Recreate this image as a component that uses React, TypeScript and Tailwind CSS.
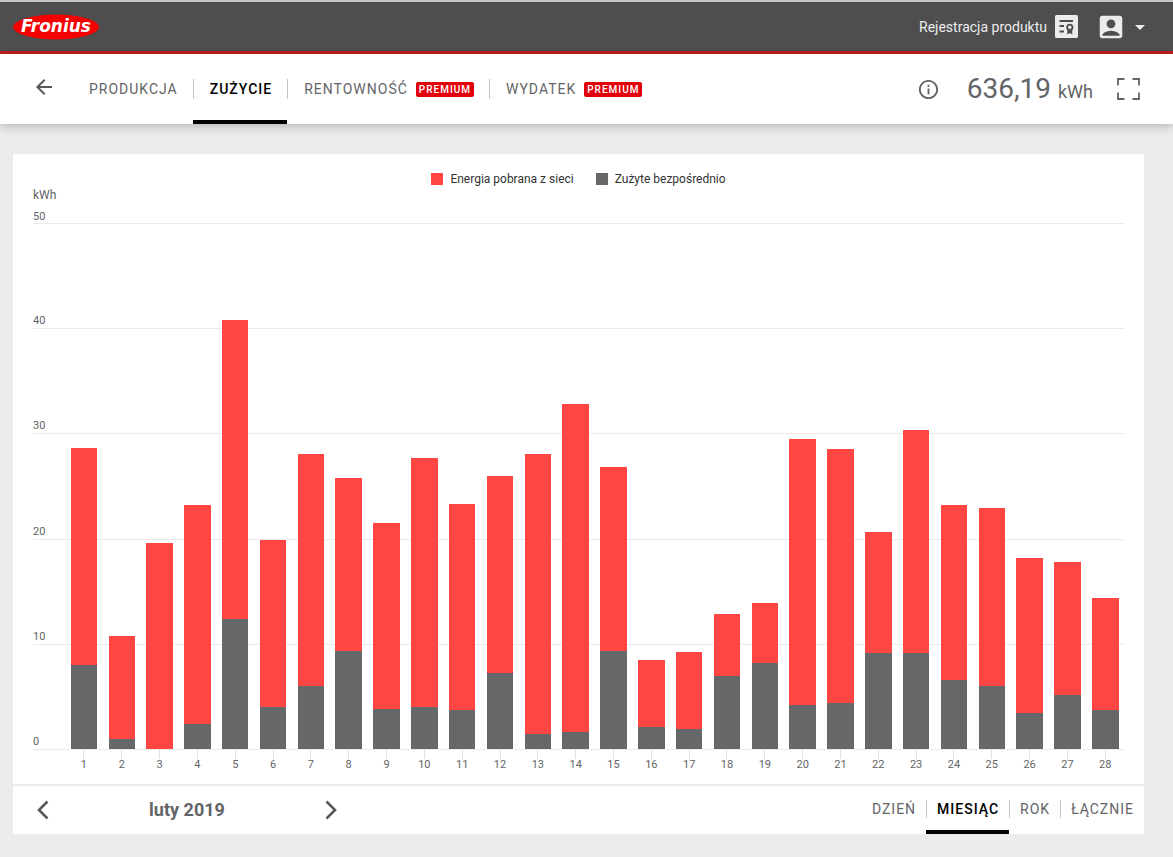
import clsx from "clsx";
import { MdAccountBox, MdArrowBack, MdArrowDropDown, MdInfoOutline } from "react-icons/md";

const MAX_KWH = 50;

const tabs = [
  { label: "PRODUKCJA" },
  { label: "ZUŻYCIE", active: true },
  { label: "RENTOWNOŚĆ", premium: true },
  { label: "WYDATEK", premium: true },
];

const ranges = [
  { label: "DZIEŃ" },
  { label: "MIESIĄC", active: true },
  { label: "ROK" },
  { label: "ŁĄCZNIE" },
];

// kWh per day: total consumption and the part consumed directly
const days = [
  { total: 28.7, direct: 8.0 },
  { total: 10.8, direct: 1.0 },
  { total: 19.6, direct: 0 },
  { total: 23.2, direct: 2.4 },
  { total: 40.9, direct: 12.4 },
  { total: 19.9, direct: 4.0 },
  { total: 28.1, direct: 6.0 },
  { total: 25.8, direct: 9.3 },
  { total: 21.5, direct: 3.8 },
  { total: 27.7, direct: 4.0 },
  { total: 23.3, direct: 3.7 },
  { total: 26.0, direct: 7.2 },
  { total: 28.1, direct: 1.4 },
  { total: 32.9, direct: 1.6 },
  { total: 26.9, direct: 9.3 },
  { total: 8.5, direct: 2.1 },
  { total: 9.2, direct: 1.9 },
  { total: 12.9, direct: 7.0 },
  { total: 13.9, direct: 8.2 },
  { total: 29.5, direct: 4.2 },
  { total: 28.6, direct: 4.4 },
  { total: 20.7, direct: 9.1 },
  { total: 30.4, direct: 9.1 },
  { total: 23.2, direct: 6.6 },
  { total: 23.0, direct: 6.0 },
  { total: 18.2, direct: 3.4 },
  { total: 17.8, direct: 5.1 },
  { total: 14.4, direct: 3.7 },
];

function Logo() {
  return (
    <svg width="86" height="26" viewBox="0 0 86 26" role="img" aria-label="Fronius">
      <ellipse cx="43" cy="13" rx="43" ry="12.5" fill="#f50000" />
      <text
        x="43"
        y="18"
        textAnchor="middle"
        fontFamily="DejaVu Sans"
        fontSize="17"
        fontWeight="700"
        fontStyle="italic"
        fill="#fff"
      >
        Fronius
      </text>
    </svg>
  );
}

function CertificateIcon() {
  return (
    <svg width="23" height="23" viewBox="0 0 23 23" aria-hidden="true">
      <rect width="23" height="23" rx="1.5" fill="#ebedec" />
      <g stroke="#4e4e4e" strokeWidth="1.8" fill="none">
        <path d="M4.500 6h13.500M4.500 11h4.500M4.500 16.500h4.500" />
        <circle cx="14.800" cy="12.300" r="2.700" />
      </g>
      <path d="M12.300 14.500v5l2.500-1.600 2.500 1.600v-5l-2.500 1.200z" fill="#4e4e4e" />
    </svg>
  );
}

function FullscreenIcon() {
  return (
    <svg width="23" height="22" viewBox="0 0 23 22" fill="none" stroke="#636466" strokeWidth="1.800">
      <path d="M1 7.500V1h6.500M15.500 1H22v6.500M22 14.500V21h-6.500M7.500 21H1v-6.500" />
    </svg>
  );
}

function Chevron({ direction }: { direction: "left" | "right" }) {
  return (
    <svg width="12" height="20" viewBox="0 0 12 20" fill="none" stroke="#58595b" strokeWidth="2.600">
      <path d={direction === "left" ? "M10.500 1.500L2 10l8.500 8.500" : "M1.500 1.500L10 10l-8.500 8.500"} />
    </svg>
  );
}

function Header() {
  return (
    <header className="flex h-[54px] items-center justify-between border-t-2 border-b-3 border-t-[#c4c6c5] border-b-[#c01f1f] bg-[#4e4e4e] pr-[21px] pl-[13px]">
      <a href="#">
        <Logo />
      </a>
      <div className="flex items-center">
        <a href="#" className="flex items-center gap-2 text-sm text-[#ebedec]">
          Rejestracja produktu
          <CertificateIcon />
        </a>
        <button type="button" aria-label="Konto" className="ml-[18px] flex items-center text-[#ebedec]">
          <MdAccountBox size={30} />
          <MdArrowDropDown size={24} className="ml-0.5" />
        </button>
      </div>
    </header>
  );
}

function Navigation() {
  return (
    <div className="relative flex h-[70px] items-center justify-between bg-white pr-[33px] pl-8 shadow-[0_2px_10px_rgba(0,0,0,0.25)]">
      <div className="flex h-full items-center">
        <button type="button" aria-label="Wstecz" className="mr-4 pb-1 text-[#58595b]">
          <MdArrowBack size={24} />
        </button>
        <nav className="flex h-full">
          {tabs.map((tab, index) => (
            <a
              key={tab.label}
              href="#"
              className={clsx(
                "flex flex-col justify-center border-y-4 border-t-transparent",
                tab.active ? "border-b-black font-medium text-black" : "border-b-transparent text-[#636466]"
              )}
            >
              <span
                className={clsx(
                  "flex h-5 items-center gap-2 border-l pr-[15px] pl-4 text-sm tracking-[1px]",
                  index > 0 ? "border-[#c4c6c8]" : "border-transparent"
                )}
              >
                {tab.label}
                {tab.premium && (
                  <span className="rounded-xs bg-[#e3000b] px-[3px] text-[10px] leading-[15px] font-medium text-white">
                    PREMIUM
                  </span>
                )}
              </span>
            </a>
          ))}
        </nav>
      </div>
      <div className="flex items-center text-[#636466]">
        <button type="button" aria-label="Informacje">
          <MdInfoOutline size={23} />
        </button>
        <p className="ml-[27px] text-[28px] leading-8">
          636,19 <span className="text-lg">kWh</span>
        </p>
        <button type="button" aria-label="Pełny ekran" className="ml-6">
          <FullscreenIcon />
        </button>
      </div>
    </div>
  );
}

function Chart() {
  return (
    <div className="pt-[17px] pr-5 pb-[13px] pl-5 text-[#636466]">
      <ul className="flex justify-center gap-[22px] text-xs text-[#333]">
        <li className="flex items-center gap-[7px]">
          <span className="size-3 bg-[#ff4642]" />
          Energia pobrana z sieci
        </li>
        <li className="flex items-center gap-[7px]">
          <span className="size-3 bg-[#666769]" />
          Zużyte bezpośrednio
        </li>
      </ul>

      <div className="text-xs">kWh</div>
      <div className="flex h-[21px] items-end border-b border-[#ebebeb] text-[11px] leading-3">50</div>

      <div className="grid h-[526px]">
        <div className="col-start-1 row-start-1 flex flex-col">
          {[40, 30, 20, 10, 0].map((value) => (
            <div
              key={value}
              className="flex flex-1 items-end border-b border-[#ebebeb] pb-px text-[11px] leading-3"
            >
              {value}
            </div>
          ))}
        </div>
        <div className="col-start-1 row-start-1 flex pb-px pl-8">
          {days.map((day, index) => (
            <div key={index} className="flex flex-1 flex-col items-center justify-end">
              <div
                className="w-7/10 bg-[#ff4642]"
                style={{ height: `${((day.total - day.direct) / MAX_KWH) * 100}%` }}
              />
              <div className="w-7/10 bg-[#666769]" style={{ height: `${(day.direct / MAX_KWH) * 100}%` }} />
            </div>
          ))}
        </div>
      </div>

      <div className="flex pl-8 text-[11px] leading-3">
        {days.map((_, index) => (
          <div key={index} className="flex flex-1 flex-col items-center">
            <span className="h-[9px] w-px bg-[#e0e0e0]" />
            {index + 1}
          </div>
        ))}
      </div>
    </div>
  );
}

function Footer() {
  return (
    <div className="flex h-[50px] items-stretch justify-between border-t-2 border-[#ebedec] pl-6">
      <div className="flex w-[300px] items-center justify-between">
        <button type="button" aria-label="Poprzedni miesiąc">
          <Chevron direction="left" />
        </button>
        <span className="text-lg font-bold text-[#636466]">luty 2019</span>
        <button type="button" aria-label="Następny miesiąc">
          <Chevron direction="right" />
        </button>
      </div>
      <div className="flex">
        {ranges.map((range, index) => (
          <button
            key={range.label}
            type="button"
            className={clsx(
              "flex flex-col justify-center border-t-2 border-b-4 border-t-transparent",
              range.active ? "border-b-black font-medium text-black" : "border-b-transparent text-[#636466]"
            )}
          >
            <span
              className={clsx(
                "border-l px-[10px] text-sm leading-[18px] tracking-[1px]",
                index > 0 ? "border-[#c4c6c8]" : "border-transparent"
              )}
            >
              {range.label}
            </span>
          </button>
        ))}
      </div>
    </div>
  );
}

export default function App() {
  return (
    <div className="min-h-screen bg-[#ebedec] font-[Roboto,sans-serif]">
      <Header />
      <Navigation />
      <main className="mt-[30px] mr-[29px] mb-[23px] ml-[13px] bg-white">
        <Chart />
        <Footer />
      </main>
    </div>
  );
}
